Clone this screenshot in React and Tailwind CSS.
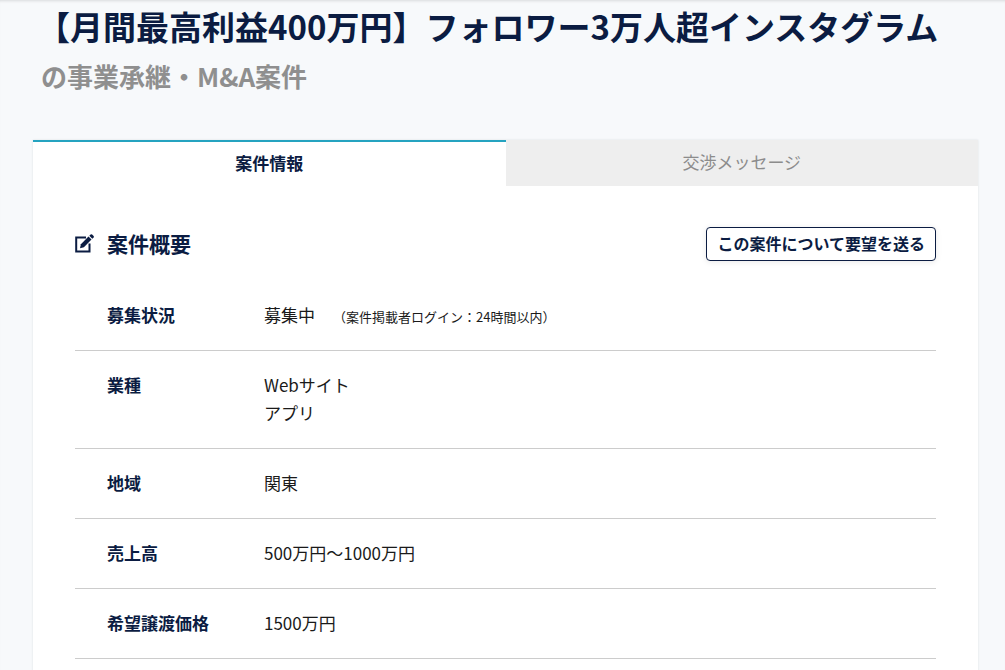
import React from 'react';

const rows = [
  { label: '募集状況', values: ['募集中'], note: '（案件掲載者ログイン：24時間以内）' },
  { label: '業種', values: ['Webサイト', 'アプリ'] },
  { label: '地域', values: ['関東'] },
  { label: '売上高', values: ['500万円〜1000万円'] },
  { label: '希望譲渡価格', values: ['1500万円'] },
];

const EditIcon = ({ className = '' }) => (
  <svg viewBox="0 0 20 20" className={className} fill="none" aria-hidden="true">
    <path d="M11 4.5H1.2V18.5H14.5V10.5" stroke="currentColor" strokeWidth="2" />
    <path d="M5 15.2l.9-4 7.6-7.6 3 3-7.6 7.6z" fill="currentColor" />
    <path d="M14.3 2.8l1.3-1.3a1.1 1.1 0 0 1 1.5 0l1.5 1.5a1.1 1.1 0 0 1 0 1.5l-1.3 1.3z" fill="currentColor" />
  </svg>
);

const Tabs = () => (
  <div role="tablist" className="grid grid-cols-2 text-[17px] leading-[28px]">
    <button
      type="button"
      role="tab"
      aria-selected="true"
      className="h-[46px] border-t-2 border-[#25a3c0] bg-white pb-0.5 font-bold text-[#0b1c42]"
    >
      案件情報
    </button>
    <button type="button" role="tab" aria-selected="false" className="h-[46px] bg-[#eeeeee] pb-0.5 text-[#8c8c8c]">
      交渉メッセージ
    </button>
  </div>
);

const DetailTable = () => (
  <table className="w-full text-left text-[17px] leading-[28px]">
    <tbody>
      {rows.map((row) => (
        <tr key={row.label} className="border-b border-[#cccccc] align-top">
          <th scope="row" className="w-[189px] pt-5 pb-[21px] pl-8 font-bold text-[#0b1c42]">
            {row.label}
          </th>
          <td className="pt-5 pb-[21px] text-[#1a1a1a]">
            {row.values.map((value) => (
              <p key={value}>
                {value}
                {row.note && <span className="ml-[18px] text-[13px] leading-[20px]">{row.note}</span>}
              </p>
            ))}
          </td>
        </tr>
      ))}
    </tbody>
  </table>
);

const App = () => {
  return (
    <div className="min-h-screen bg-[#f7f9fb] pr-[27px] pl-[33px] font-['Noto_Sans_CJK_JP',sans-serif] shadow-[inset_0_3px_3px_-2px_#d8dadc]">
      <h1 className="font-bold">
        <span className="block pt-0.5 pl-1 text-[33px] leading-[48px] text-[#0b1c42]">
          【月間最高利益400万円】フォロワー3万人超インスタグラム
        </span>
        <span className="block pt-1.5 pl-2 text-[26px] leading-[40px] text-[#8f8f8f]">の事業承継・M&amp;A案件</span>
      </h1>

      <main className="mt-11 bg-white shadow-[0_0_2px_#dcdfe3]">
        <Tabs />
        <section className="px-[42px] pt-[41px] pb-10">
          <div className="mb-5 flex items-start justify-between">
            <h2 className="flex items-center gap-3 text-[21px] leading-[32px] font-bold text-[#0b1c42]">
              <EditIcon className="size-5" />
              案件概要
            </h2>
            <button
              type="button"
              className="h-[34px] rounded-[4px] border border-[#0b1c42] bg-white px-[10px] pb-0.5 text-[16px] leading-[28px] font-bold text-[#0b1c42] shadow-[0_1px_6px_#e8e8e8]"
            >
              この案件について要望を送る
            </button>
          </div>
          <DetailTable />
        </section>
      </main>
    </div>
  );
};

export default App;
